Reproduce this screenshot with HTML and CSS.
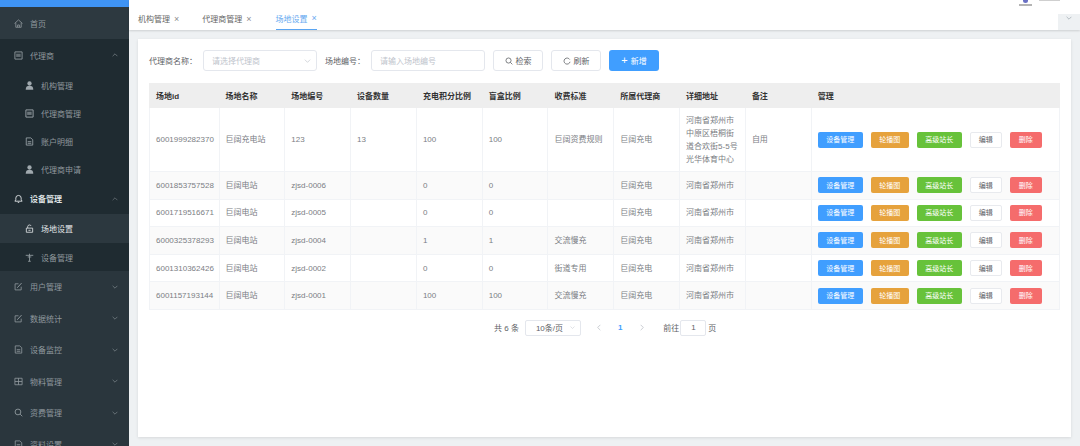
FILE: index.html
```html
<!DOCTYPE html>
<html lang="zh">
<head>
<meta charset="utf-8">
<title>场地设置</title>
<link rel="stylesheet" href="styles.css">
</head>
<body>
<svg class="defs" width="0" height="0" aria-hidden="true">
  <symbol id="i-home" viewBox="0 0 10 10"><path d="M.6 5 5 1l4.4 4M2 4.2v5h6v-5M4 9V6.6h2V9" fill="none" stroke="currentColor" stroke-width=".9"/></symbol>
  <symbol id="i-board" viewBox="0 0 10 10"><path d="M1 1h8v8H1z" fill="none" stroke="currentColor" stroke-width="1"/><path d="M2.4 3h5v3.6h-5z" fill="currentColor" opacity=".6"/></symbol>
  <symbol id="i-user" viewBox="0 0 10 10"><circle cx="5" cy="2.8" r="2.4" fill="currentColor"/><path d="M.8 9.6c0-3.2 1.6-4.2 4.2-4.2s4.2 1 4.2 4.2z" fill="currentColor"/></symbol>
  <symbol id="i-doc" viewBox="0 0 10 10"><path d="M1.4 1h5L8.6 3v6H1.4zM3 5.2h4M3 7h4" fill="none" stroke="currentColor" stroke-width=".9"/></symbol>
  <symbol id="i-bell" viewBox="0 0 10 10"><path d="M1 8h8L8 6.4V4.6a3 3 0 0 0-6 0v1.8zM4.2 9.3h1.6" fill="none" stroke="currentColor" stroke-width="1"/></symbol>
  <symbol id="i-lock" viewBox="0 0 10 10"><path d="M1.5 4.6h7v4.6h-7zM3 4.6V2.8a2 2 0 0 1 3.8-.6M3.8 7h2.4" fill="none" stroke="currentColor" stroke-width=".9"/></symbol>
  <symbol id="i-tool" viewBox="0 0 10 10"><path d="M.8 2.6h8.4M5 .8v8.4M3 4.4h4M3.4 9.2h3" fill="none" stroke="currentColor" stroke-width="1"/></symbol>
  <symbol id="i-edit" viewBox="0 0 10 10"><path d="M8 5.2v3.6H1.2V2H5" fill="none" stroke="currentColor" stroke-width=".9"/><path d="M3.6 6.4 8.4 1.2" stroke="currentColor" stroke-width="1.1"/></symbol>
  <symbol id="i-grid" viewBox="0 0 10 10"><path d="M1 1.4h8v7.2H1zM5 1.4v7.2M1 5h8" fill="none" stroke="currentColor" stroke-width=".9"/></symbol>
  <symbol id="i-search" viewBox="0 0 10 10"><circle cx="4.4" cy="4.4" r="3.2" fill="none" stroke="currentColor"/><path d="m6.8 6.8 2.4 2.4" stroke="currentColor"/></symbol>
  <symbol id="i-refresh" viewBox="0 0 10 10"><path d="M8.4 3.2A3.8 3.8 0 1 0 8.8 6" fill="none" stroke="currentColor"/></symbol>
  <symbol id="i-up" viewBox="0 0 10 6"><path d="m1 5 4-4 4 4" fill="none" stroke="currentColor"/></symbol>
  <symbol id="i-down" viewBox="0 0 10 6"><path d="m1 1 4 4 4-4" fill="none" stroke="currentColor"/></symbol>
  <symbol id="i-left" viewBox="0 0 6 10"><path d="M5 1 1 5l4 4" fill="none" stroke="currentColor"/></symbol>
  <symbol id="i-right" viewBox="0 0 6 10"><path d="m1 1 4 4-4 4" fill="none" stroke="currentColor"/></symbol>
</svg>

<div class="app">
  <aside class="sidebar">
    <div class="brand-strip"></div>
    <a class="menu-item home"><svg class="ic"><use href="#i-home"/></svg><span>首页</span></a>
    <div class="group-dark">
      <a class="menu-item"><svg class="ic"><use href="#i-board"/></svg><span>代理商</span><svg class="arrow"><use href="#i-up"/></svg></a>
      <a class="sub-item"><svg class="ic"><use href="#i-user"/></svg><span>机构管理</span></a>
      <a class="sub-item"><svg class="ic"><use href="#i-board"/></svg><span>代理商管理</span></a>
      <a class="sub-item"><svg class="ic"><use href="#i-doc"/></svg><span>账户明细</span></a>
      <a class="sub-item"><svg class="ic"><use href="#i-user"/></svg><span>代理商申请</span></a>
      <a class="menu-item open"><svg class="ic"><use href="#i-bell"/></svg><span>设备管理</span><svg class="arrow"><use href="#i-up"/></svg></a>
    </div>
    <a class="sub-item active"><svg class="ic"><use href="#i-lock"/></svg><span>场地设置</span></a>
    <a class="sub-item dark"><svg class="ic"><use href="#i-tool"/></svg><span>设备管理</span></a>
    <a class="menu-item"><svg class="ic"><use href="#i-edit"/></svg><span>用户管理</span><svg class="arrow"><use href="#i-down"/></svg></a>
    <a class="menu-item"><svg class="ic"><use href="#i-edit"/></svg><span>数据统计</span><svg class="arrow"><use href="#i-down"/></svg></a>
    <a class="menu-item"><svg class="ic"><use href="#i-doc"/></svg><span>设备监控</span><svg class="arrow"><use href="#i-down"/></svg></a>
    <a class="menu-item"><svg class="ic"><use href="#i-grid"/></svg><span>物料管理</span><svg class="arrow"><use href="#i-down"/></svg></a>
    <a class="menu-item"><svg class="ic"><use href="#i-search"/></svg><span>资费管理</span><svg class="arrow"><use href="#i-down"/></svg></a>
    <a class="menu-item"><svg class="ic"><use href="#i-doc"/></svg><span>资料设置</span><svg class="arrow"><use href="#i-down"/></svg></a>
  </aside>

  <main class="main">
    <header class="topbar">
      <nav class="tabs">
        <a class="tab">机构管理<i>×</i></a>
        <a class="tab">代理商管理<i>×</i></a>
        <a class="tab current">场地设置<i>×</i></a>
      </nav>
      <div class="top-right">
        <div class="logo-row">
          <div class="logo"><b></b><s></s></div>
          <div class="logo-text"></div>
        </div>
        <div class="tab-more"><svg class="arrow"><use href="#i-down"/></svg></div>
      </div>
    </header>

    <section class="content">
      <div class="card">
        <form class="filters">
          <label class="flabel first">代理商名称：</label>
          <div class="field select"><span>请选择代理商</span><svg class="arrow"><use href="#i-down"/></svg></div>
          <label class="flabel">场地编号：</label>
          <div class="field input"><span>请输入场地编号</span></div>
          <a class="btn-plain"><svg class="bi"><use href="#i-search"/></svg>检索</a>
          <a class="btn-plain"><svg class="bi"><use href="#i-refresh"/></svg>刷新</a>
          <a class="btn-primary"><span class="plus">+</span>新增</a>
        </form>

        <table class="grid">
          <colgroup>
            <col class="c-id"><col class="c-m"><col class="c-m"><col class="c-m"><col class="c-m"><col class="c-m"><col class="c-m"><col class="c-m"><col class="c-m"><col class="c-m"><col class="c-last">
          </colgroup>
          <thead>
            <tr><th>场地id</th><th>场地名称</th><th>场地编号</th><th>设备数量</th><th>充电积分比例</th><th>盲盒比例</th><th>收费标准</th><th>所属代理商</th><th>详细地址</th><th>备注</th><th>管理</th></tr>
          </thead>
          <tbody>
            <tr class="tall"><td>6001999282370</td><td>巨阔充电站</td><td>123</td><td>13</td><td>100</td><td>100</td><td>巨阔资费规则</td><td>巨阔充电</td><td>河南省郑州市中原区梧桐街道合欢街5-5号光华体育中心</td><td>自用</td><td><div class="ops"><a class="op blue">设备管理</a><a class="op orange">轮播图</a><a class="op green">高级站长</a><a class="op white">编辑</a><a class="op red">删除</a></div></td></tr>
            <tr class="stripe"><td>6001853757528</td><td>巨阔电站</td><td>zjsd-0006</td><td></td><td>0</td><td>0</td><td></td><td>巨阔充电</td><td>河南省郑州市</td><td></td><td><div class="ops"><a class="op blue">设备管理</a><a class="op orange">轮播图</a><a class="op green">高级站长</a><a class="op white">编辑</a><a class="op red">删除</a></div></td></tr>
            <tr><td>6001719516671</td><td>巨阔电站</td><td>zjsd-0005</td><td></td><td>0</td><td>0</td><td></td><td>巨阔充电</td><td>河南省郑州市</td><td></td><td><div class="ops"><a class="op blue">设备管理</a><a class="op orange">轮播图</a><a class="op green">高级站长</a><a class="op white">编辑</a><a class="op red">删除</a></div></td></tr>
            <tr class="stripe"><td>6000325378293</td><td>巨阔电站</td><td>zjsd-0004</td><td></td><td>1</td><td>1</td><td>交流慢充</td><td>巨阔充电</td><td>河南省郑州市</td><td></td><td><div class="ops"><a class="op blue">设备管理</a><a class="op orange">轮播图</a><a class="op green">高级站长</a><a class="op white">编辑</a><a class="op red">删除</a></div></td></tr>
            <tr><td>6001310362426</td><td>巨阔电站</td><td>zjsd-0002</td><td></td><td>0</td><td>0</td><td>街道专用</td><td>巨阔充电</td><td>河南省郑州市</td><td></td><td><div class="ops"><a class="op blue">设备管理</a><a class="op orange">轮播图</a><a class="op green">高级站长</a><a class="op white">编辑</a><a class="op red">删除</a></div></td></tr>
            <tr class="stripe"><td>6001157193144</td><td>巨阔电站</td><td>zjsd-0001</td><td></td><td>100</td><td>100</td><td>交流慢充</td><td>巨阔充电</td><td>河南省郑州市</td><td></td><td><div class="ops"><a class="op blue">设备管理</a><a class="op orange">轮播图</a><a class="op green">高级站长</a><a class="op white">编辑</a><a class="op red">删除</a></div></td></tr>
          </tbody>
        </table>

        <div class="pager">
          <span class="total">共 6 条</span>
          <div class="size"><span>10条/页</span><svg class="arrow"><use href="#i-down"/></svg></div>
          <svg class="nav prev"><use href="#i-left"/></svg>
          <span class="num">1</span>
          <svg class="nav next"><use href="#i-right"/></svg>
          <span class="goto">前往</span>
          <div class="jump">1</div>
          <span class="unit">页</span>
        </div>
      </div>
    </section>
  </main>
</div>
</body>
</html>
```

FILE: styles.css
```css
* { box-sizing: border-box; }
html, body { margin: 0; height: 100%; overflow: hidden; }
body {
  font-family: "Liberation Sans", "Noto Sans CJK SC", sans-serif;
  font-size: 8px;
  color: #606266;
  background: #eef1f3;
}
.defs { position: absolute; }
a { display: flex; text-decoration: none; }

.app { display: flex; width: 1080px; height: 446px; overflow: hidden; }

/* sidebar */
.sidebar {
  flex: 0 0 129px;
  height: 446px;
  overflow: hidden;
  background: #2a363d;
  color: #8f989d;
}
.brand-strip { height: 7px; background: #3f94f5; }
.ic { width: 9px; height: 9px; flex: none; margin-right: 7px; }
.arrow { width: 6px; height: 4px; flex: none; margin-left: auto; }
.menu-item {
  align-items: center;
  height: 31.5px;
  padding: 0 11px 0 14px;
}
.home { height: 32px; background: #2d3940; }
.group-dark { background: #1f2b31; }
.group-dark .menu-item:first-child { height: 32px; }
.sub-item {
  align-items: center;
  height: 28px;
  padding-left: 25px;
}
.group-dark .sub-item .ic { color: #a0a9ae; }
.open { color: #dfe3e5; font-weight: 700; height: 31px; }
.open .ic { color: #dfe3e5; }
.open .arrow { color: #7f888d; }
.active { height: 29px; background: #2c383f; color: #e4e7e9; }
.dark { background: #1f2b31; }

/* main */
.main { flex: 1; min-width: 0; display: flex; flex-direction: column; }
.topbar {
  position: relative;
  z-index: 1;
  flex: 0 0 30px;
  display: flex;
  justify-content: space-between;
  background: #fff;
  box-shadow: 0 1px 2px rgba(0, 0, 0, .14);
}
.tabs { display: flex; align-items: stretch; padding: 7px 0 0 9px; }
.tab {
  align-items: center;
  height: 23px;
  margin-right: 23px;
  color: #666;
  white-space: nowrap;
}
.tab i { margin-left: 4px; font-style: normal; font-size: 9px; color: #8d8d8d; }
.tab:nth-child(2) { margin-right: 24px; }
.current {
  color: #66a9f0;
  border-bottom: 1px solid #5aa5f2;
  padding-right: 0;
}
.current i { color: #66a9f0; }

.top-right {
  display: flex;
  flex-direction: column;
  align-items: flex-end;
  justify-content: space-between;
}
.logo-row { display: flex; gap: 7px; margin-right: 20px; }
.logo { width: 13px; height: 7px; display: flex; flex-direction: column; align-items: center; }
.logo b { width: 5px; height: 3px; border-radius: 0 0 3px 3px; background: #6a70c4; }
.logo s { width: 13px; height: 2px; margin-top: 1px; background: #b4b4b4; }
.logo-text { width: 21px; height: 1px; background: #cfcfcf; }
.tab-more {
  display: flex;
  align-items: flex-start;
  justify-content: center;
  width: 22px;
  height: 16px;
  padding-top: 2px;
  background: #eef1f3;
  color: #8f9aa3;
}
.tab-more .arrow { margin: 0; }

/* content */
.content { flex: 1; min-height: 0; padding: 9px; }
.card {
  height: 398px;
  padding: 11px 11px 0;
  background: #fff;
  box-shadow: 0 1px 3px rgba(0, 0, 0, .1);
}

/* filters */
.filters { display: flex; align-items: center; height: 21px; margin-bottom: 12px; }
.flabel { color: #606266; white-space: nowrap; }
.first { width: 54px; margin-right: 0; }
.field {
  display: flex;
  align-items: center;
  height: 21px;
  padding: 0 8px;
  border: 1px solid #e4e7ed;
  border-radius: 3px;
  color: #c0c4cc;
}
.select { width: 114px; margin-right: 8px; padding-right: 5px; }
.select .arrow { width: 7px; color: #c0c4cc; }
.input { width: 114px; margin: 0 8px 0 6px; }
.btn-plain, .btn-primary {
  align-items: center;
  justify-content: center;
  width: 50px;
  height: 21px;
  margin-right: 8px;
  border-radius: 3px;
}
.btn-plain { border: 1px solid #e4e7ed; color: #606266; }
.btn-primary { background: #409eff; color: #fff; }
.bi { width: 8px; height: 8px; margin-right: 3px; }
.plus { margin-right: 3px; font-size: 11px; line-height: 1; }

/* table */
.grid { width: 910px; table-layout: fixed; border-collapse: collapse; }
.c-id { width: 69.5px; }
.c-m { width: 65.8px; }
.c-last { width: 248.3px; }
.grid th, .grid td {
  padding: 0 6px;
  border: 1px solid #f1f3f6;
  text-align: left;
}
.grid th { height: 24px; padding-bottom: 1px; background: #eeeeee; border-color: #eeeeee; color: #333; font-weight: 700; }
.grid td { height: 27.6px; color: #7b7e84; line-height: 13px; }
.tall td { height: 64px; }
.stripe td { background: #fafafa; }
.ops { display: flex; }
.op {
  align-items: center;
  justify-content: center;
  height: 16px;
  margin-right: 8px;
  border-radius: 2px;
  font-size: 7px;
  color: #fff;
  white-space: nowrap;
}
.blue { width: 45px; background: #409eff; }
.orange { width: 38px; background: #e6a23c; }
.green { width: 45px; background: #67c23a; }
.white { width: 32px; border: 1px solid #e8eaee; background: #fff; color: #606266; }
.red { width: 32px; background: #f56c6c; }

/* pager */
.pager { display: flex; align-items: center; height: 16px; margin: 10px 0 0 345px; color: #606266; }
.total { margin-right: 6px; white-space: nowrap; }
.size {
  display: flex;
  align-items: center;
  width: 56px;
  height: 16px;
  padding: 0 5px 0 10px;
  border: 1px solid #e4e7ed;
  border-radius: 2px;
}
.size .arrow { width: 5px; height: 3px; color: #c0c4cc; }
.nav { width: 4px; height: 7px; flex: none; color: #b0b5bd; }
.prev { margin-left: 16px; }
.num { margin-left: 17px; color: #409eff; font-weight: 700; }
.next { margin-left: 18px; }
.goto { margin-left: 19px; }
.jump {
  display: flex;
  align-items: center;
  justify-content: center;
  width: 26px;
  height: 16px;
  margin: 0 2px 0 1px;
  border: 1px solid #e4e7ed;
  border-radius: 2px;
}
```
